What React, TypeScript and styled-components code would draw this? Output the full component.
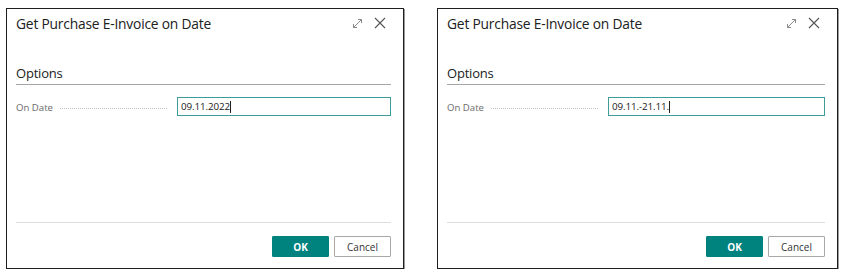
import React from "react";
import styled, { createGlobalStyle } from "styled-components";

const Global = createGlobalStyle`
  html, body { margin: 0; padding: 0; background: #ffffff; }
  body { font-family: "Open Sans", "Noto Sans", sans-serif; color: #212121; }
`;

const Page = styled.div`
  display: flex;
  gap: 33px;
  padding: 8px 0 0 6px;
`;

const Dialog = styled.section<{ $w: number }>`
  box-sizing: border-box;
  width: ${(p) => p.$w}px;
  height: 261px;
  border: 1px solid #1e1e1e;
  box-shadow: 1px 1px 0 #9a9a9a;
  background: #fff;
  display: flex;
  flex-direction: column;
  padding: 0 12px 0 9px;
`;

const Header = styled.div`
  display: flex;
  align-items: center;
  justify-content: space-between;
  height: 28px;
`;

const Title = styled.h1`
  margin: 0;
  font-size: 13.8px;
  font-weight: 400;
  color: #212121;
  letter-spacing: -0.2px;
`;

const Icons = styled.div`
  display: flex;
  align-items: center;
  gap: 11px;
  margin-right: 5px;
`;

const Section = styled.div`
  margin-top: 27px;
  border-bottom: 1.5px solid #a6a6a6;
  padding-bottom: 2px;
`;

const SectionTitle = styled.h2`
  margin: 0;
  font-size: 13px;
  font-weight: 400;
  color: #212121;
  letter-spacing: -0.2px;
`;

const FieldRow = styled.div`
  display: flex;
  align-items: center;
  margin-top: 12px;
  height: 19px;
`;

const LabelCell = styled.div`
  flex: 0 0 161px;
  display: flex;
  align-items: center;
`;

const Label = styled.span`
  font-size: 9.6px;
  color: #6a6a6a;
  white-space: nowrap;
  transform: translateY(1px);
`;

const Leader = styled.span`
  flex: 1;
  margin: 0 10px 0 7px;
  border-bottom: 1px dotted #c2c2c2;
  transform: translateY(2px);
`;

const Input = styled.div`
  box-sizing: border-box;
  flex: 1;
  height: 19px;
  border: 1px solid #3f9c9a;
  display: flex;
  align-items: center;
  padding-left: 3px;
  font-size: 9.8px;
  letter-spacing: -0.1px;
  color: #212121;
`;

const Caret = styled.span`
  display: inline-block;
  width: 1px;
  height: 12px;
  background: #212121;
`;

const Spacer = styled.div`
  flex: 1;
`;

const Footer = styled.div`
  border-top: 1px solid #dcdcdc;
  display: flex;
  justify-content: flex-end;
  gap: 5px;
  padding-top: 13px;
  height: 46px;
  box-sizing: border-box;
`;

const Button = styled.button<{ $primary?: boolean }>`
  box-sizing: border-box;
  width: 57px;
  height: 21px;
  font-family: "Open Sans", "Noto Sans", sans-serif;
  font-size: 10px;
  font-weight: ${(p) => (p.$primary ? 700 : 400)};
  color: ${(p) => (p.$primary ? "#ffffff" : "#333333")};
  background: ${(p) => (p.$primary ? "#00827f" : "#ffffff")};
  border: 1px solid ${(p) => (p.$primary ? "#00827f" : "#a8a8a8")};
  border-radius: 1px;
  padding: 0;
  cursor: pointer;
`;

const ExpandIcon = () => (
  <svg width="11" height="11" viewBox="0 0 11 11" fill="none" stroke="#8a8a8a" strokeWidth="1">
    <path d="M1.5 9.5 L9.5 1.5" />
    <path d="M6 1.5 H9.5 V5" />
    <path d="M1.5 6 V9.5 H5" />
  </svg>
);

const CloseIcon = () => (
  <svg width="12" height="12" viewBox="0 0 12 12" fill="none" stroke="#555" strokeWidth="1.1">
    <path d="M1 1 L11 11 M11 1 L1 11" />
  </svg>
);

const DateDialog = ({ value, width }: { value: string; width: number }) => (
  <Dialog $w={width}>
    <Header>
      <Title>Get Purchase E-Invoice on Date</Title>
      <Icons>
        <ExpandIcon />
        <CloseIcon />
      </Icons>
    </Header>
    <Section>
      <SectionTitle>Options</SectionTitle>
    </Section>
    <FieldRow>
      <LabelCell>
        <Label>On Date</Label>
        <Leader />
      </LabelCell>
      <Input>
        {value}
        <Caret />
      </Input>
    </FieldRow>
    <Spacer />
    <Footer>
      <Button $primary>OK</Button>
      <Button>Cancel</Button>
    </Footer>
  </Dialog>
);

export default function App() {
  return (
    <>
      <Global />
      <Page>
        <DateDialog value="09.11.2022" width={398} />
        <DateDialog value="09.11.-21.11." width={401} />
      </Page>
    </>
  );
}
